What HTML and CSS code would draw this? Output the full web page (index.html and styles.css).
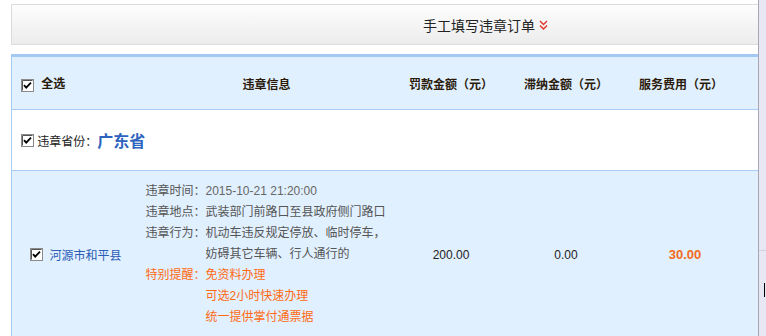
FILE: index.html
```html
<!DOCTYPE html>
<html lang="zh-CN">
<head>
    <meta charset="UTF-8">
    <title>手工填写违章订单</title>
    <link rel="stylesheet" href="styles.css">
</head>
<body>
<div class="page">
    <div class="main">
        <div class="order-title">
            <span>手工填写违章订单</span>
            <svg class="chevron" width="9" height="11" viewBox="0 0 9 11">
                <polyline points="1,1 4.5,4.5 8,1" fill="none" stroke="#e0322a" stroke-width="1.4"/>
                <polyline points="1,5.5 4.5,9 8,5.5" fill="none" stroke="#e0322a" stroke-width="1.4"/>
            </svg>
        </div>

        <table class="orders">
            <colgroup>
                <col class="c-check">
                <col class="c-info">
                <col class="c-money">
                <col class="c-money">
                <col class="c-fee">
            </colgroup>
            <tr class="head-row">
                <th class="sel-all">
                    <span class="cb"><svg width="13" height="13" viewBox="0 0 13 13"><rect x="0.5" y="0.5" width="12" height="12" fill="#fff" stroke="#8a8a8a"/><path d="M1.5 1.5H11.5" stroke="#555"/><path d="M1.5 1.5V11.5" stroke="#555"/><path d="M3 6.2 5.2 8.6 10 3.6" fill="none" stroke="#000" stroke-width="1.8"/></svg></span>
                    全选
                </th>
                <th>违章信息</th>
                <th>罚款金额（元）</th>
                <th>滞纳金额（元）</th>
                <th class="fee">服务费用（元）</th>
            </tr>
            <tr class="prov-row">
                <td colspan="5">
                    <span class="cb"><svg width="13" height="13" viewBox="0 0 13 13"><rect x="0.5" y="0.5" width="12" height="12" fill="#fff" stroke="#8a8a8a"/><path d="M1.5 1.5H11.5" stroke="#555"/><path d="M1.5 1.5V11.5" stroke="#555"/><path d="M3 6.2 5.2 8.6 10 3.6" fill="none" stroke="#000" stroke-width="1.8"/></svg></span>
                    <span class="prov-label">违章省份：</span><span class="prov-name">广东省</span>
                </td>
            </tr>
            <tr class="item-row">
                <td class="city">
                    <span class="cb"><svg width="13" height="13" viewBox="0 0 13 13"><rect x="0.5" y="0.5" width="12" height="12" fill="#fff" stroke="#8a8a8a"/><path d="M1.5 1.5H11.5" stroke="#555"/><path d="M1.5 1.5V11.5" stroke="#555"/><path d="M3 6.2 5.2 8.6 10 3.6" fill="none" stroke="#000" stroke-width="1.8"/></svg></span>
                    <a href="#">河源市和平县</a>
                </td>
                <td class="info">
                    <dl>
                        <dt>违章时间：</dt><dd class="num">2015-10-21 21:20:00</dd>
                        <dt>违章地点：</dt><dd>武装部门前路口至县政府侧门路口</dd>
                        <dt>违章行为：</dt><dd>机动车违反规定停放、临时停车，妨碍其它车辆、行人通行的</dd>
                        <dt class="tip">特别提醒：</dt>
                        <dd class="tip">免资料办理<br>可选2小时快速办理<br>统一提供掌付通票据</dd>
                    </dl>
                </td>
                <td class="amount">200.00</td>
                <td class="amount">0.00</td>
                <td class="amount fee service">30.00</td>
            </tr>
        </table>
    </div>
    <div class="side">
        <div class="side-top"></div>
        <div class="side-bottom"><span class="caret"></span></div>
    </div>
</div>
</body>
</html>
```

FILE: styles.css
```css
body {
    margin: 0;
    background: #fff;
    font-family: "Liberation Sans", "Noto Sans CJK SC", sans-serif;
    font-size: 12px;
    color: #333;
    overflow: hidden;
}

.page {
    display: flex;
    height: 336px;
}

.main {
    width: 747px;
    padding: 4px 0 0 11px;
}

.side {
    width: 7px;
    border-left: 1px solid #a6a6b4;
    background: #e8e8f4;
    display: flex;
    flex-direction: column;
}

.side-top {
    height: 250px;
    border-bottom: 1px solid #d2d2de;
}

.side-bottom {
    padding: 32px 0 0 5px;
}

.caret {
    display: block;
    width: 1px;
    height: 14px;
    background: #000;
}

.order-title {
    height: 39px;
    border: 1px solid #dcdcdc;
    border-right: none;
    background: linear-gradient(#fdfdfd, #ececec);
    display: flex;
    align-items: center;
    justify-content: center;
    padding-left: 201px;
    font-size: 14px;
    color: #222;
    margin-bottom: 9px;
}

.chevron {
    margin-left: 4px;
    margin-top: 2px;
}

.orders {
    width: 747px;
    border-collapse: collapse;
    border-top: 3px solid #a3c8f4;
    border-left: 1px solid #a9ccf2;
    table-layout: fixed;
}

.c-check { width: 128px; }
.c-info { width: 254px; }
.c-money { width: 115px; }
.c-fee { width: 135px; }

.cb {
    display: inline-block;
    width: 13px;
    height: 13px;
    vertical-align: middle;
    line-height: 0;
}

.head-row {
    background: #e1f0fe;
    height: 54px;
    border-bottom: 1px solid #a9ccf2;
}

.head-row th {
    font-size: 12px;
    font-weight: bold;
    color: #2a1a0a;
    text-align: center;
    padding: 0;
}

.head-row th.sel-all {
    text-align: left;
    padding-left: 9px;
}

.sel-all .cb {
    margin-right: 4px;
}

.head-row th.fee {
    padding-right: 20px;
}

.item-row td.fee {
    padding-right: 12px;
}

.prov-row {
    height: 61px;
    border-bottom: 1px solid #a9ccf2;
}

.prov-row td {
    padding: 0 0 0 9px;
}

.prov-row .cb {
    margin-right: 0;
}

.prov-label {
    color: #222;
    vertical-align: middle;
}

.prov-name {
    font-size: 16px;
    font-weight: bold;
    color: #2e63be;
    vertical-align: middle;
}

.item-row {
    background: #e1f0fe;
}

.item-row td {
    padding: 10px 0 9px;
    vertical-align: middle;
}

.city {
    text-align: center;
}

.city .cb {
    margin-right: 3px;
}

.city a {
    color: #2a5cb8;
    text-decoration: none;
    vertical-align: middle;
}

.info dl {
    margin: 0 0 0 6px;
    display: grid;
    grid-template-columns: 60px 186px;
    line-height: 21px;
    color: #555;
}

.info dt,
.info dd {
    margin: 0;
}

.info .num {
    color: #666;
}

.info .tip {
    color: #ff6a13;
}

.amount {
    text-align: center;
    color: #222;
}

.service {
    color: #f26a1c;
    font-weight: bold;
    font-size: 13px;
}
```
